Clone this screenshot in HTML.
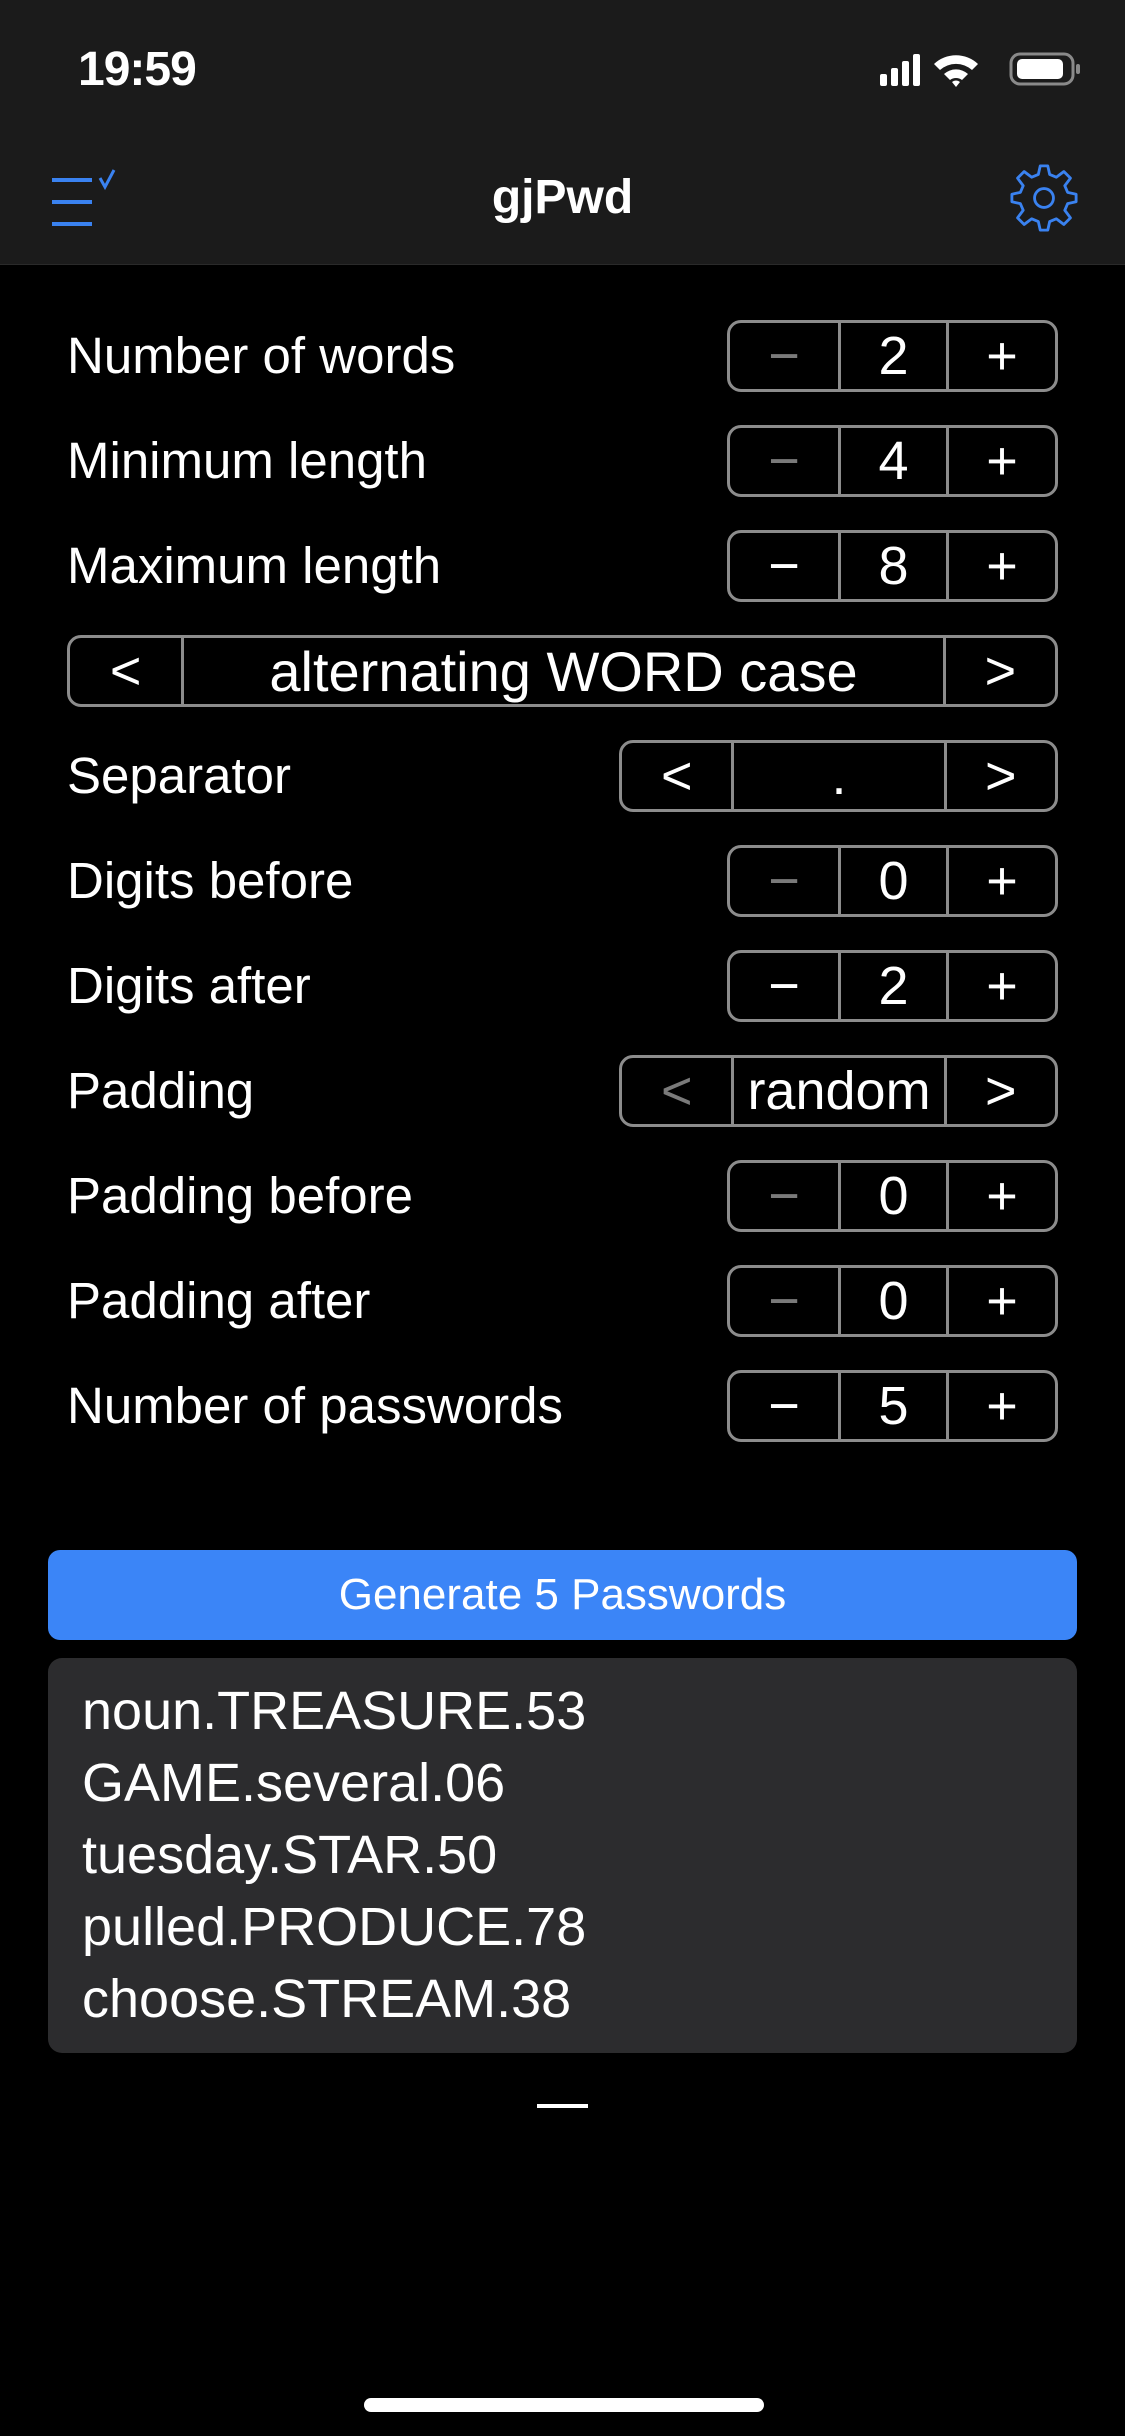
<!DOCTYPE html>
<html><head><meta charset="utf-8"><style>
*{margin:0;padding:0;box-sizing:border-box}
body{width:1125px;height:2436px;background:#000;position:relative;overflow:hidden;font-family:"Liberation Sans",Arial,sans-serif;color:#fff}
.a{position:absolute}
.top{left:0;top:0;width:1125px;height:265px;background:#1b1b1b;border-bottom:1px solid #2a2a2a}
.lbl{left:67px;font-size:51px;line-height:60px;height:60px}
.box{position:absolute;height:72px;border:3px solid #8c8c8c;border-radius:14px;display:flex}
.box div{height:100%;display:flex;align-items:center;justify-content:center;font-size:54px;border-left:3px solid #8c8c8c}
.box div:first-child{border-left:none}
.g{color:#7a7a7a}
.pw{left:82px;font-size:54px;line-height:72px}
</style></head><body>
<div class="a top"></div>
<div class="a" style="left:78px;top:42px;font-size:48px;font-weight:bold;letter-spacing:-1px">19:59</div>
<svg class="a" style="left:878px;top:50px" width="210" height="40" viewBox="0 0 210 40">
<rect x="2" y="24" width="7" height="12" rx="2" fill="#fff"/><rect x="13" y="18" width="7" height="18" rx="2" fill="#fff"/><rect x="24" y="11" width="7" height="25" rx="2" fill="#fff"/><rect x="35" y="4" width="7" height="32" rx="2" fill="#fff"/>
<path d="M56 14 A32 32 0 0 1 100 14 L94 20 A24 24 0 0 0 62 20Z M66 24 A18 18 0 0 1 90 24 L84 30 A10 10 0 0 0 72 30Z M74 32 A6 6 0 0 1 82 32 L78 37Z" fill="#fff"/>
<rect x="133" y="4" width="62" height="30" rx="9" fill="none" stroke="#8a8a8a" stroke-width="3"/><rect x="139" y="9" width="46" height="20" rx="5" fill="#fff"/><rect x="198" y="14" width="4" height="10" rx="2" fill="#8a8a8a"/>
</svg>
<svg class="a" style="left:50px;top:168px" width="70" height="60" viewBox="0 0 70 60">
<g stroke="#3a82f0" stroke-width="4"><line x1="2" y1="12" x2="42" y2="12"/><line x1="2" y1="34" x2="42" y2="34"/><line x1="2" y1="56" x2="42" y2="56"/></g>
<path d="M50 10 L55 19 L64 2" stroke="#3a82f0" stroke-width="3" fill="none"/></svg>
<div class="a" style="left:0;width:1125px;top:170px;text-align:center;font-size:48px;font-weight:bold">gjPwd</div>
<svg class="a" style="left:1010px;top:164px" width="68" height="68" viewBox="-36 -36 72 72">
<path d="M-4 -34 L4 -34 L6 -25 L13 -22 L21 -28 L28 -21 L22 -13 L25 -6 L34 -4 L34 4 L25 6 L22 13 L28 21 L21 28 L13 22 L6 25 L4 34 L-4 34 L-6 25 L-13 22 L-21 28 L-28 21 L-22 13 L-25 6 L-34 4 L-34 -4 L-25 -6 L-22 -13 L-28 -21 L-21 -28 L-13 -22 L-6 -25Z" fill="none" stroke="#3a82f0" stroke-width="3" stroke-linejoin="round"/>
<circle r="10" fill="none" stroke="#3a82f0" stroke-width="3"/></svg>

<div class="a lbl" style="top:326px">Number of words</div>
<div class="box" style="left:727px;top:320px;width:331px"><div class="g" style="width:110px">−</div><div style="width:110px">2</div><div style="width:111px">+</div></div>
<div class="a lbl" style="top:431px">Minimum length</div>
<div class="box" style="left:727px;top:425px;width:331px"><div class="g" style="width:110px">−</div><div style="width:110px">4</div><div style="width:111px">+</div></div>
<div class="a lbl" style="top:536px">Maximum length</div>
<div class="box" style="left:727px;top:530px;width:331px"><div style="width:110px">−</div><div style="width:110px">8</div><div style="width:111px">+</div></div>
<div class="box" style="left:67px;top:635px;width:991px"><div style="width:112px">&lt;</div><div style="width:766px;font-size:56px">alternating WORD case</div><div style="width:113px">&gt;</div></div>
<div class="a lbl" style="top:746px">Separator</div>
<div class="box" style="left:619px;top:740px;width:439px"><div style="width:111px">&lt;</div><div style="width:215px">.</div><div style="width:113px">&gt;</div></div>
<div class="a lbl" style="top:851px">Digits before</div>
<div class="box" style="left:727px;top:845px;width:331px"><div class="g" style="width:110px">−</div><div style="width:110px">0</div><div style="width:111px">+</div></div>
<div class="a lbl" style="top:956px">Digits after</div>
<div class="box" style="left:727px;top:950px;width:331px"><div style="width:110px">−</div><div style="width:110px">2</div><div style="width:111px">+</div></div>
<div class="a lbl" style="top:1061px">Padding</div>
<div class="box" style="left:619px;top:1055px;width:439px"><div class="g" style="width:111px">&lt;</div><div style="width:215px">random</div><div style="width:113px">&gt;</div></div>
<div class="a lbl" style="top:1166px">Padding before</div>
<div class="box" style="left:727px;top:1160px;width:331px"><div class="g" style="width:110px">−</div><div style="width:110px">0</div><div style="width:111px">+</div></div>
<div class="a lbl" style="top:1271px">Padding after</div>
<div class="box" style="left:727px;top:1265px;width:331px"><div class="g" style="width:110px">−</div><div style="width:110px">0</div><div style="width:111px">+</div></div>
<div class="a lbl" style="top:1376px">Number of passwords</div>
<div class="box" style="left:727px;top:1370px;width:331px"><div style="width:110px">−</div><div style="width:110px">5</div><div style="width:111px">+</div></div>

<div class="a" style="left:48px;top:1550px;width:1029px;height:90px;background:#3b85f7;border-radius:12px;text-align:center;line-height:90px;font-size:44px">Generate 5 Passwords</div>
<div class="a" style="left:48px;top:1658px;width:1029px;height:395px;background:#2c2c2e;border-radius:14px"></div>
<div class="a pw" style="top:1675px">noun.TREASURE.53<br>GAME.several.06<br>tuesday.STAR.50<br>pulled.PRODUCE.78<br>choose.STREAM.38</div>
<div class="a" style="left:537px;top:2104px;width:51px;height:4px;background:#fff"></div>
<div class="a" style="left:364px;top:2398px;width:400px;height:14px;background:#fff;border-radius:7px"></div>
</body></html>
